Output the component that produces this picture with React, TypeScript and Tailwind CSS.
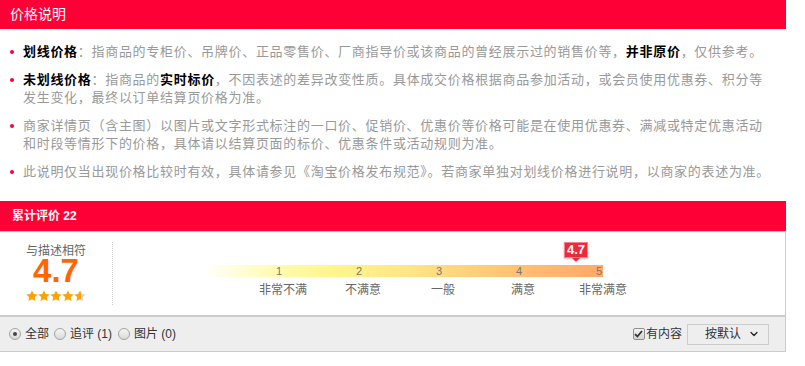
import { ChevronDown } from "lucide-react";

const Dot = () => (
  <span className="mt-[7px] mr-[9px] ml-[10px] h-[4px] w-[4px] shrink-0 rounded-full bg-[#ff0036]" />
);

const B = ({ children }: { children: React.ReactNode }) => (
  <b className="font-bold text-[#000]">{children}</b>
);

const STAR = "M6 .4l1.7 3.6 3.9.5-2.9 2.7.8 3.9L6 9.2l-3.5 1.9.8-3.9L.4 4.5l3.9-.5z";

const Star = ({ half = false }: { half?: boolean }) => (
  <svg width="12" height="12" viewBox="0 0 12 12">
    {half && (
      <defs>
        <linearGradient id="halfStar">
          <stop offset="55%" stopColor="#ffa200" />
          <stop offset="55%" stopColor="#d6d6d6" />
        </linearGradient>
      </defs>
    )}
    <path d={STAR} fill={half ? "url(#halfStar)" : "#ffa200"} />
  </svg>
);

const Radio = ({ checked = false }: { checked?: boolean }) => (
  <span className="flex h-[12px] w-[12px] items-center justify-center rounded-full border border-[#a3a3a3] bg-gradient-to-b from-[#f6f6f6] to-[#d9d9d9]">
    {checked && <span className="h-[4px] w-[4px] rounded-full bg-[#444]" />}
  </span>
);

const levels = [
  { n: 1, label: "非常不满" },
  { n: 2, label: "不满意" },
  { n: 3, label: "一般" },
  { n: 4, label: "满意" },
  { n: 5, label: "非常满意" },
];

export default function App() {
  return (
    <div className="w-[786px] bg-white font-['Liberation_Sans','Noto_Sans_CJK_SC',sans-serif]">
      {/* 价格说明 */}
      <div className="flex h-[29px] items-center bg-[#ff0036] pl-[10px] text-[14px] text-white">
        价格说明
      </div>
      <ul className="pt-[14px] pb-[20px] text-[13px] leading-[18px] tracking-[0.7px] text-[#999] whitespace-nowrap">
        <li className="mb-[10px] flex">
          <Dot />
          <p>
            <B>划线价格</B>：指商品的专柜价、吊牌价、正品零售价、厂商指导价或该商品的曾经展示过的销售价等，<B>并非原价</B>，仅供参考。
          </p>
        </li>
        <li className="mb-[10px] flex">
          <Dot />
          <p>
            <B>未划线价格</B>：指商品的<B>实时标价</B>，不因表述的差异改变性质。具体成交价格根据商品参加活动，或会员使用优惠券、积分等
            <br />
            发生变化，最终以订单结算页价格为准。
          </p>
        </li>
        <li className="mb-[10px] flex">
          <Dot />
          <p>
            商家详情页（含主图）以图片或文字形式标注的一口价、促销价、优惠价等价格可能是在使用优惠券、满减或特定优惠活动
            <br />
            和时段等情形下的价格，具体请以结算页面的标价、优惠条件或活动规则为准。
          </p>
        </li>
        <li className="flex">
          <Dot />
          <p>
            此说明仅当出现价格比较时有效，具体请参见《淘宝价格发布规范》。若商家单独对划线价格进行说明，以商家的表述为准。
          </p>
        </li>
      </ul>

      {/* 累计评价 */}
      <div className="flex h-[30px] items-center bg-[#ff0036] pl-[12px] text-[12px] font-bold text-white">
        累计评价 22
      </div>
      <div className="flex h-[84px] border-t border-r border-[#ccc]">
        <div className="flex w-[112px] flex-col items-center pt-[13px]">
          <span className="text-[12px] leading-[12px] text-[#666]">与描述相符</span>
          <span className="text-[33px] leading-[28px] font-bold text-[#ff6600]">4.7</span>
          <div className="mt-[5px] flex">
            <Star />
            <Star />
            <Star />
            <Star />
            <Star half />
          </div>
        </div>
        <div className="mt-[10px] h-[63px] border-l border-dotted border-[#ccc]" />
        <div className="pt-[33px] pl-[90px]">
          <div className="relative flex h-[12px] w-[400px] bg-[linear-gradient(to_right,#ffffff_0%,#fffbb0_18%,#fff68c_32%,#ffe585_52%,#ffc474_76%,#ffa968_100%)]">
            {levels.map((l) => (
              <span
                key={l.n}
                className="w-[80px] pr-[1px] text-right text-[11px] leading-[12px] text-[#777]"
              >
                {l.n}
              </span>
            ))}
            <div className="absolute top-[-23px] left-[361px] flex flex-col items-center">
              <span className="border border-[#f7808a] bg-[#ec2a3b] px-[2px] text-[13px] leading-[14px] font-bold text-white shadow-[0_1px_2px_rgba(0,0,0,0.25)]">
                4.7
              </span>
              <span className="h-0 w-0 border-x-[4px] border-t-[4px] border-x-transparent border-t-[#ec2a3b]" />
            </div>
          </div>
          <div className="mt-[6px] ml-[40px] grid w-[400px] grid-cols-5 text-center text-[12px] leading-[14px] text-[#666]">
            {levels.map((l) => (
              <span key={l.n}>{l.label}</span>
            ))}
          </div>
        </div>
      </div>

      {/* 筛选条 */}
      <div className="flex h-[37px] items-center justify-between border-t-2 border-r border-b border-[#ccc] bg-[#eee] text-[12px] text-[#333]">
        <div className="flex items-center pl-[9px]">
          <Radio checked />
          <span className="mr-[5px] ml-[4px]">全部</span>
          <Radio />
          <span className="mr-[6px] ml-[4px]">追评 (1)</span>
          <Radio />
          <span className="ml-[4px]">图片 (0)</span>
        </div>
        <div className="flex items-center pr-[16px]">
          <span className="flex h-[12px] w-[12px] items-center justify-center rounded-[2px] border border-[#8f8f8f] bg-gradient-to-b from-[#f2f2f2] to-[#d4d4d4]">
            <svg width="9" height="8" viewBox="0 0 9 8">
              <path d="M1 4.2l2.4 2.3L8 1" stroke="#333" strokeWidth="1.8" fill="none" />
            </svg>
          </span>
          <span className="ml-[1px]">有内容</span>
          <div className="ml-[5px] flex h-[21px] w-[82px] items-center border border-[#ccc] pr-[8px] pl-[17px]">
            <span className="flex-1">按默认</span>
            <ChevronDown size={12} strokeWidth={2.5} color="#222" />
          </div>
        </div>
      </div>
    </div>
  );
}
